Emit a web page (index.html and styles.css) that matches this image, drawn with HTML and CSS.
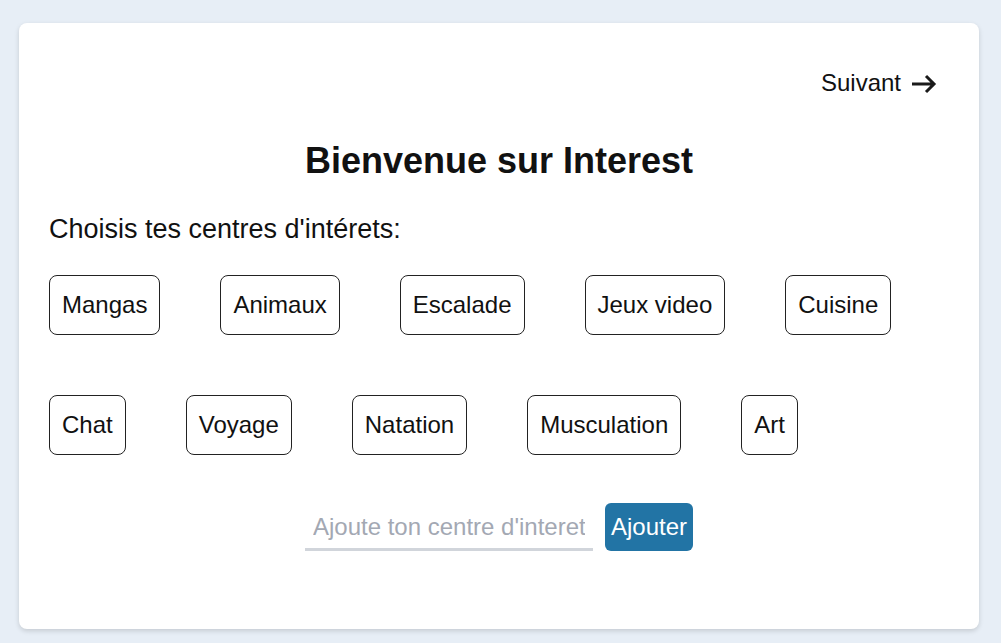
FILE: index.html
```html
<!DOCTYPE html>
<html lang="fr">
<head>
<meta charset="utf-8">
<title>Interest</title>
<link rel="stylesheet" href="styles.css">
</head>
<body>
<main class="card">
  <div class="top">
    <a class="next" href="#">Suivant
      <svg class="arrow" width="26" height="20" viewBox="0 0 26 20" aria-hidden="true"><path d="M1 10H23M15 2L23 10L15 18" fill="none" stroke="#1a1a1a" stroke-width="3" stroke-linecap="butt" stroke-linejoin="miter"/></svg>
    </a>
  </div>
  <h1 class="title">Bienvenue sur Interest</h1>
  <p class="subtitle">Choisis tes centres d'intérets:</p>
  <div class="tags">
    <button class="tag">Mangas</button>
    <button class="tag">Animaux</button>
    <button class="tag">Escalade</button>
    <button class="tag">Jeux video</button>
    <button class="tag">Cuisine</button>
    <button class="tag">Chat</button>
    <button class="tag">Voyage</button>
    <button class="tag">Natation</button>
    <button class="tag">Musculation</button>
    <button class="tag">Art</button>
  </div>
  <form class="add">
    <input class="add-input" type="text" placeholder="Ajoute ton centre d'interet">
    <button class="add-btn" type="button">Ajouter</button>
  </form>
</main>
</body>
</html>
```
FILE: styles.css
```css
* { box-sizing: border-box; }
html, body { margin: 0; }
body {
  background: #e7eef6;
  font-family: "Liberation Sans", Arial, sans-serif;
  color: #111;
  padding: 23px 22px 14px 19px;
}
.card {
  width: 960px;
  height: 606px;
  background: #fff;
  border-radius: 8px;
  box-shadow: 0 2px 5px rgba(0, 0, 0, 0.15);
  padding: 46px 30px 30px 30px;
}
.top {
  display: flex;
  justify-content: flex-end;
  padding-right: 12px;
}
.next {
  display: flex;
  align-items: center;
  gap: 10px;
  font-size: 24px;
  line-height: 28px;
  color: #111;
  text-decoration: none;
}
.arrow { display: block; margin-top: 1px; }
.title {
  margin: 43px 0 0;
  text-align: center;
  font-size: 36px;
  line-height: 42px;
  font-weight: 700;
  color: #111;
}
.subtitle {
  margin: 32px 0 0;
  font-size: 27px;
  line-height: 31px;
}
.tags {
  display: flex;
  flex-wrap: wrap;
  column-gap: 60px;
  row-gap: 60px;
  margin-top: 30px;
}
.tag {
  font-family: inherit;
  font-size: 24px;
  line-height: 28px;
  color: #111;
  background: #fff;
  border: 1px solid #222;
  border-radius: 8px;
  padding: 15px 12px;
  cursor: pointer;
}
.add {
  display: flex;
  justify-content: center;
  align-items: center;
  gap: 12px;
  margin-top: 48px;
}
.add-input {
  width: 288px;
  height: 48px;
  font-family: inherit;
  font-size: 24px;
  border: none;
  border-bottom: 3px solid #d1d5db;
  padding: 2px 8px 0;
  outline: none;
  color: #111;
}
.add-input::placeholder { color: #a3a8b3; }
.add-btn {
  height: 48px;
  font-family: inherit;
  font-size: 24px;
  color: #fff;
  background: #2274a5;
  border: none;
  border-radius: 6px;
  padding: 0 6px;
  cursor: pointer;
}
```
